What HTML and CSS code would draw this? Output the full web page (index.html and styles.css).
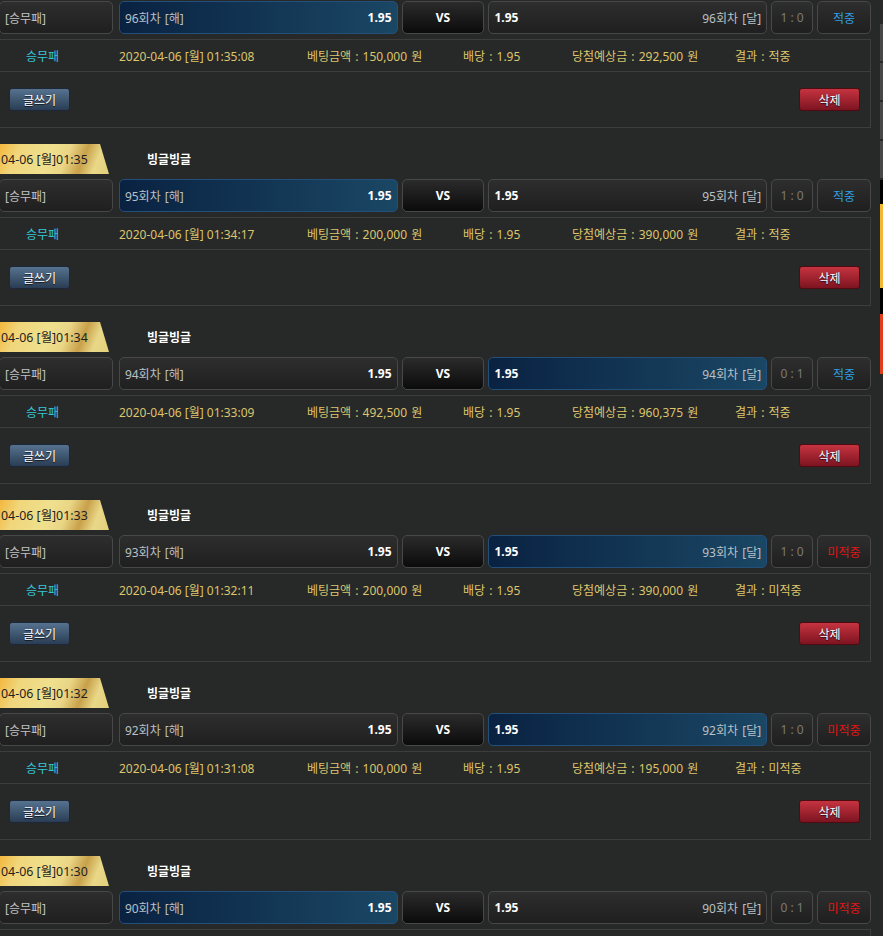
FILE: index.html
```html
<!DOCTYPE html>
<html lang="ko">
<head>
  <meta charset="UTF-8">
  <meta name="viewport" content="width=device-width, initial-scale=1.0">
  <title>배팅내역</title>
  <link rel="stylesheet" href="styles.css">
</head>
<body>

  <!-- Bet history list -->
  <div class="bet-list" id="bet-list">
    <!-- Bet items will be added here -->
  </div>

  <!-- Side strip -->
  <div class="side-strip">
    <div class="strip-gap"></div>
    <div class="strip-grey"></div>
    <div class="strip-grey"></div>
    <div class="strip-grey"></div>
    <div class="strip-grey"></div>
    <div class="strip-black"></div>
    <div class="strip-yellow"></div>
    <div class="strip-black2"></div>
    <div class="strip-red"></div>
  </div>

  <script>
    // Bet data (first item's tab is scrolled out of view)
    const bets = [
      { tab: null,              round: 96, pick: "home", score: "1 : 0", win: true,  time: "2020-04-06 [월] 01:35:08", amount: "150,000", payout: "292,500" },
      { tab: "04-06 [월]01:35", round: 95, pick: "home", score: "1 : 0", win: true,  time: "2020-04-06 [월] 01:34:17", amount: "200,000", payout: "390,000" },
      { tab: "04-06 [월]01:34", round: 94, pick: "away", score: "0 : 1", win: true,  time: "2020-04-06 [월] 01:33:09", amount: "492,500", payout: "960,375" },
      { tab: "04-06 [월]01:33", round: 93, pick: "away", score: "1 : 0", win: false, time: "2020-04-06 [월] 01:32:11", amount: "200,000", payout: "390,000" },
      { tab: "04-06 [월]01:32", round: 92, pick: "away", score: "1 : 0", win: false, time: "2020-04-06 [월] 01:31:08", amount: "100,000", payout: "195,000" },
      { tab: "04-06 [월]01:30", round: 90, pick: "home", score: "0 : 1", win: false, time: "2020-04-06 [월] 01:29:10", amount: "100,000", payout: "195,000" },
    ];

    // Build the list
    const list = document.getElementById("bet-list");

    bets.forEach(bet => {
      const result = bet.win ? "적중" : "미적중";
      const head = bet.tab ? `
        <div class="bet-head">
          <span class="date-tab">${bet.tab}</span>
          <span class="game-name">빙글빙글</span>
        </div>` : "";
      const item = document.createElement("div");
      item.classList.add("bet");
      item.innerHTML = `
        ${head}
        <div class="pick-row">
          <div class="cell type">[승무패]</div>
          <div class="cell team home ${bet.pick === "home" ? "on" : ""}">
            <span class="team-name">${bet.round}회차 [해]</span>
            <span class="odd">1.95</span>
          </div>
          <div class="cell vs">VS</div>
          <div class="cell team away ${bet.pick === "away" ? "on" : ""}">
            <span class="odd">1.95</span>
            <span class="team-name">${bet.round}회차 [달]</span>
          </div>
          <div class="cell score">${bet.score}</div>
          <div class="cell result ${bet.win ? "win" : "lose"}">${result}</div>
        </div>
        <div class="bet-info">
          <div class="info-row">
            <span class="i-type">승무패</span>
            <span class="i-time">${bet.time}</span>
            <span class="i-amount">베팅금액 : ${bet.amount} 원</span>
            <span class="i-odd">배당 : 1.95</span>
            <span class="i-payout">당첨예상금 : ${bet.payout} 원</span>
            <span class="i-result">결과 : ${result}</span>
          </div>
          <div class="btn-row">
            <button class="btn btn-write">글쓰기</button>
            <button class="btn btn-delete">삭제</button>
          </div>
        </div>
      `;
      list.appendChild(item);
    });
  </script>

</body>
</html>
```

FILE: styles.css
```css
/* General Styles */
body {
  font-family: "Noto Sans", "Noto Sans CJK KR", sans-serif;
  font-size: 12px;
  margin: 0;
  padding: 0;
  background-color: #272828;
  color: #c4c4c4;
  display: flex;
  align-items: flex-start;
  overflow: hidden;
}

.bet-list {
  width: 872px;
  margin-left: -1px;
  margin-top: 1px;
  flex-shrink: 0;
}

.bet {
  margin-bottom: 16px;
}

/* Date tab + game name */
.bet-head {
  display: flex;
  align-items: center;
  height: 30px;
  margin-bottom: 5px;
}

.date-tab {
  display: flex;
  align-items: center;
  width: 110px;
  height: 30px;
  padding-left: 2px;
  box-sizing: border-box;
  color: #1f1f1f;
  font-size: 12.4px;
  background: linear-gradient(112deg, #f3b63a 0%, #f0d67c 18%, #efe08e 45%, #e9d585 60%, #c8a04a 74%, #e9d888 86%, #e3cf7a 100%);
  clip-path: polygon(0 0, 101px 0, 110px 100%, 0 100%);
}

.game-name {
  margin-left: 38px;
  color: #fff;
  font-weight: bold;
  font-size: 12px;
}

/* Pick row */
.pick-row {
  display: flex;
  height: 33px;
}

.cell {
  display: flex;
  align-items: center;
  box-sizing: border-box;
  height: 33px;
  border: 1px solid #484848;
  border-radius: 5px;
  background: linear-gradient(#2e2e2e, #1f1f1f);
  margin-left: 4px;
}

.cell.type {
  width: 114px;
  margin-left: 0;
  padding-left: 5px;
  color: #c2c2c2;
}

.cell.team {
  width: 279px;
  justify-content: space-between;
  padding: 0 5px;
}

.cell.home {
  margin-left: 6px;
}

.cell.team.on {
  background: linear-gradient(to right, #0a2242, #1a4764);
  border-color: #234f78;
}

.team-name {
  color: #b9c0c6;
  word-spacing: 1px;
}

.odd {
  color: #fff;
  font-weight: bold;
}

.cell.vs {
  width: 83px;
  justify-content: center;
  color: #fff;
  font-weight: bold;
  background: linear-gradient(#2b2b2b, #0b0b0b);
}

.cell.score {
  width: 42px;
  justify-content: center;
  color: #7a7a7a;
}

.cell.result {
  width: 54px;
  justify-content: center;
}

.cell.result.win {
  color: #2e9fe4;
}

.cell.result.lose {
  color: #e21414;
}

/* Info box */
.bet-info {
  margin-top: 5px;
  border: 1px solid #3d3d3d;
  width: 872px;
  box-sizing: border-box;
}

.info-row {
  display: flex;
  align-items: center;
  height: 31px;
  border-bottom: 1px solid #3d3d3d;
  color: #dcc56c;
}

.i-type {
  color: #36c6d6;
  margin-left: 26px;
  width: 93px;
}

.i-time {
  width: 188px;
}

.i-amount {
  width: 156px;
  word-spacing: 1px;
}

.i-odd {
  width: 109px;
  word-spacing: 1px;
}

.i-payout {
  width: 163px;
  word-spacing: 1px;
}

.i-result {
  word-spacing: 1px;
}

.btn-row {
  display: flex;
  justify-content: space-between;
  align-items: center;
  height: 55px;
  padding: 0 10px 0 9px;
}

.btn {
  width: 61px;
  height: 23px;
  border: 1px solid #1a1a1a;
  border-radius: 3px;
  color: #fff;
  font-family: "Noto Sans", "Noto Sans CJK KR", sans-serif;
  font-size: 12px;
  text-shadow: 0 1px 1px rgba(0, 0, 0, 0.8);
  cursor: pointer;
  padding: 0;
}

.btn-write {
  background: linear-gradient(#56728f, #2a3d54);
  border-color: #1c2838;
}

.btn-delete {
  background: linear-gradient(#c53440, #7c1420);
  border-color: #4e0c12;
}

/* Right strip */
.side-strip {
  width: 3px;
  margin-left: 9px;
  flex-shrink: 0;
}

.strip-gap {
  height: 24px;
}

.strip-grey {
  height: 37px;
  margin-bottom: 2px;
  background-color: #474747;
}

.strip-black {
  height: 24px;
  background-color: #000;
}

.strip-yellow {
  height: 84px;
  background-color: #f4b733;
}

.strip-black2 {
  height: 26px;
  background-color: #000;
}

.strip-red {
  height: 60px;
  background-color: #e23d1c;
}
```
